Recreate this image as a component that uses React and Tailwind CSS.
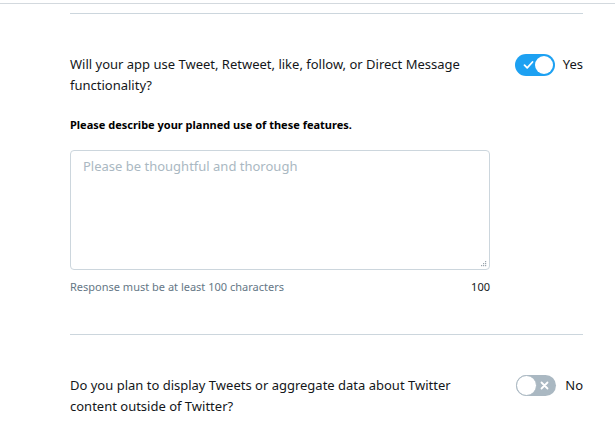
function Toggle({ on }) {
  if (on) {
    return (
      <div className="relative w-[40px] h-[22px] rounded-full bg-[#1da1f2] shrink-0">
        <svg className="absolute left-[8px] top-[6px]" width="11" height="10" viewBox="0 0 11 10">
          <path d="M1.5 5.2 L4.2 7.8 L9.5 2" fill="none" stroke="white" strokeWidth="1.8" strokeLinecap="round" strokeLinejoin="round" />
        </svg>
        <div className="absolute right-[2px] top-[2px] w-[18px] h-[18px] rounded-full bg-white" />
      </div>
    );
  }
  return (
    <div className="relative w-[40px] h-[21px] rounded-full bg-[#aab8c2] shrink-0">
      <div className="absolute left-0 top-0 w-[21px] h-[21px] rounded-full bg-white border border-[#aab8c2]" />
      <svg className="absolute left-[24px] top-[6px]" width="9" height="9" viewBox="0 0 9 9">
        <path d="M1.5 1.5 L7.5 7.5 M7.5 1.5 L1.5 7.5" stroke="white" strokeWidth="1.8" strokeLinecap="round" />
      </svg>
    </div>
  );
}

function Question({ text, on }) {
  return (
    <div className="flex items-start">
      <p className="w-[420px] text-[13px] leading-[21px] text-[#14171a]">{text}</p>
      <div className={`flex items-center ${on ? 'ml-[25px] gap-[8px]' : 'ml-[27px] gap-[9px]'}`}>
        <Toggle on={on} />
        <span className="text-[13px] text-[#14171a]">{on ? 'Yes' : 'No'}</span>
      </div>
    </div>
  );
}

export default function App() {
  return (
    <div className="w-[615px] h-[424px] bg-white overflow-hidden" style={{ fontFamily: '"Noto Sans", sans-serif' }}>
      <div className="pt-[3px]">
        <div className="h-px bg-[#d3d9de]" />
      </div>
      <div className="ml-[70px] w-[513px]">
        <div className="mt-[9px] h-px bg-[#ccd6dd]" />

        <div className="mt-[40px]">
          <Question text="Will your app use Tweet, Retweet, like, follow, or Direct Message functionality?" on />
        </div>

        <p className="mt-[20px] text-[11px] leading-[18px] font-bold text-black">
          Please describe your planned use of these features.
        </p>

        <div className="w-[420px] mt-[16px]">
          <div className="relative">
            <textarea
              className="block w-full h-[120px] rounded-[4px] border border-[#ccd6dd] px-[12px] py-[5px] text-[13px] leading-[20px] text-[#14171a] placeholder:text-[#aab8c2] outline-none resize-none"
              placeholder="Please be thoughtful and thorough"
            />
            <svg className="absolute right-[3px] bottom-[3px]" width="7" height="7" viewBox="0 0 7 7">
              <rect x="5" y="1" width="1.2" height="1.2" fill="#9aa5ad" />
              <rect x="3" y="3" width="1.2" height="1.2" fill="#9aa5ad" />
              <rect x="5" y="3" width="1.2" height="1.2" fill="#9aa5ad" />
              <rect x="1" y="5" width="1.2" height="1.2" fill="#9aa5ad" />
              <rect x="3" y="5" width="1.2" height="1.2" fill="#9aa5ad" />
              <rect x="5" y="5" width="1.2" height="1.2" fill="#9aa5ad" />
            </svg>
          </div>
          <div className="flex justify-between mt-[9px] text-[11px] leading-[16px]">
            <span className="text-[#657786]">Response must be at least 100 characters</span>
            <span className="text-[#14171a]">100</span>
          </div>
        </div>

        <div className="mt-[39px] h-px bg-[#ccd6dd]" />

        <div className="mt-[40px]">
          <Question text="Do you plan to display Tweets or aggregate data about Twitter content outside of Twitter?" />
        </div>
      </div>
    </div>
  );
}
